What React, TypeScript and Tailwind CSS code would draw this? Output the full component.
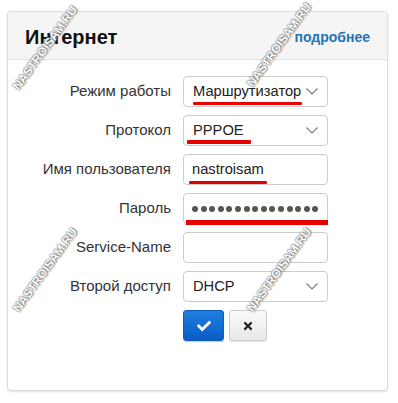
import React from "react";
import { FaCheck, FaTimes } from "react-icons/fa";

const font = { fontFamily: '"Liberation Sans", Arial, sans-serif' };

function Chevron() {
  return (
    <svg width="12" height="7" viewBox="0 0 12 7" className="shrink-0">
      <polyline points="0.5,0.5 6,6 11.5,0.5" fill="none" stroke="#777" strokeWidth="1.1" />
    </svg>
  );
}

function Watermark({ x, y }: { x: number; y: number }) {
  return (
    <span
      className="pointer-events-none absolute w-[110px] text-center text-[12px] font-bold leading-none tracking-[-0.1px] text-white [text-shadow:0_0_1px_#555,0_0_2px_#777,1px_1px_2px_#999]"
      style={{ left: x - 55, top: y - 6, transform: "rotate(-54deg)" }}
    >
      NASTROISAM.RU
    </span>
  );
}

function Underline({ className }: { className: string }) {
  return <div className={"absolute rounded-[1px] bg-[#e60000] " + className} />;
}

export default function App() {
  return (
    <div className="relative h-[403px] w-[398px] overflow-hidden bg-white" style={font}>
      <div className="ml-[7px] pt-[11px]">
        <div className="flex h-[380px] w-[381px] flex-col rounded-[4px] border border-[#dcdcdc] bg-white shadow-[0_1px_2px_rgba(0,0,0,0.12)]">
          <div className="flex h-[48px] items-center justify-between rounded-t-[4px] border-b border-[#e3e3e3] bg-[#f5f5f5] pl-[17px] pr-[17px] pt-[3px]">
            <span className="text-[20px] font-bold text-[#111]">Интернет</span>
            <span className="text-[14px] font-bold text-[#1f74b8]">подробнее</span>
          </div>
          <div className="mt-[16px] grid grid-cols-[163px_145px] gap-x-[12px] gap-y-[8px] text-[15px] text-[#333]">
            <div className="flex h-[31px] items-center justify-end">Режим работы</div>
            <div className="relative flex h-[31px] items-center justify-between rounded-[4px] border border-[#ccc] pl-[9px] pr-[9px] text-[14.7px]">
              <span className="whitespace-nowrap text-[#222]">Маршрутизатор</span>
              <Chevron />
              <Underline className="left-[9px] top-[25px] h-[3px] w-[109px]" />
            </div>

            <div className="flex h-[31px] items-center justify-end">Протокол</div>
            <div className="relative flex h-[31px] items-center justify-between rounded-[4px] border border-[#ccc] pl-[9px] pr-[9px] text-[14.7px]">
              <span className="text-[#222]">PPPOE</span>
              <Chevron />
              <Underline className="left-[3px] top-[24px] h-[4px] w-[64px]" />
            </div>

            <div className="flex h-[31px] items-center justify-end">Имя пользователя</div>
            <div className="relative flex h-[31px] items-center rounded-[4px] border border-[#ccc] pl-[8px] pr-[9px] text-[14.7px]">
              <span className="text-[#222]">nastroisam</span>
              <Underline className="left-[5px] top-[26px] h-[3px] w-[78px]" />
            </div>

            <div className="flex h-[31px] items-center justify-end">Пароль</div>
            <div className="relative flex h-[31px] items-center overflow-hidden rounded-[4px] border border-[#ccc] pl-[8px]">
              <div className="flex w-[128px] gap-[2.6px] overflow-hidden">
                {Array.from({ length: 17 }).map((_, i) => (
                  <span key={i} className="h-[6px] w-[6px] shrink-0 rounded-full bg-[#555]" />
                ))}
              </div>
            </div>

            <div className="flex h-[31px] items-center justify-end">Service-Name</div>
            <div className="flex h-[31px] items-center rounded-[4px] border border-[#ccc]" />

            <div className="flex h-[31px] items-center justify-end">Второй доступ</div>
            <div className="flex h-[31px] items-center justify-between rounded-[4px] border border-[#ccc] pl-[9px] pr-[9px] text-[14.7px]">
              <span className="text-[#222]">DHCP</span>
              <Chevron />
            </div>

            <div />
            <div className="flex gap-[5px]">
              <div className="flex h-[31px] w-[41px] items-center justify-center rounded-[3px] border border-[#0b5cc0] bg-gradient-to-b from-[#1f7ee0] to-[#0b5cc4] shadow-[0_1px_1px_rgba(0,0,0,0.2)]">
                <FaCheck className="text-white" size={14} />
              </div>
              <div className="flex h-[31px] w-[38px] items-center justify-center rounded-[3px] border border-[#ccc] bg-gradient-to-b from-[#fafafa] to-[#e8e8e8] shadow-[0_1px_1px_rgba(0,0,0,0.12)]">
                <FaTimes className="text-[#222]" size={12} />
              </div>
            </div>
          </div>
        </div>
      </div>
      <div className="pointer-events-none absolute left-[186px] top-[220px] h-[5px] w-[142px] bg-[#e60000]" />
      <Watermark x={45} y={48} />
      <Watermark x={279} y={45} />
      <Watermark x={45} y={270} />
      <Watermark x={279} y={270} />
    </div>
  );
}
